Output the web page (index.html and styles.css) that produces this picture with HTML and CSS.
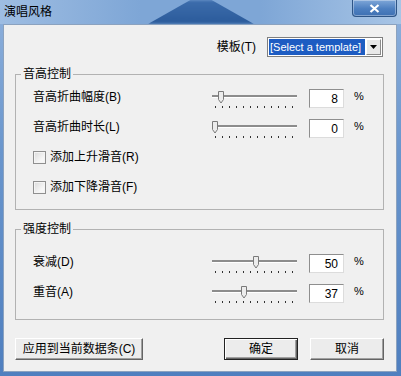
FILE: index.html
```html
<!DOCTYPE html>
<html lang="zh-CN">
<head>
    <meta charset="UTF-8">
    <title>演唱风格</title>
    <link rel="stylesheet" href="styles.css">
</head>
<body>
    <div class="window">
        <div class="titlebar">
            <span class="title">演唱风格</span>
            <span class="close">
                <svg width="11" height="9" viewBox="0 0 11 9"><path d="M1.5 1 L9.5 8 M9.5 1 L1.5 8" stroke="#fff" stroke-width="2.2"/></svg>
            </span>
        </div>

        <div class="panel">
            <div class="template-row">
                <label>模板(T)</label>
                <div class="combo">
                    <span class="combo-text">[Select a template]</span>
                    <span class="combo-btn">
                        <svg width="7" height="4" viewBox="0 0 7 4"><path d="M0 0 H7 L3.5 4 Z" fill="#000"/></svg>
                    </span>
                </div>
            </div>

            <fieldset class="group group-pitch">
                <legend>音高控制</legend>
                <div class="row">
                    <span class="label">音高折曲幅度(B)</span>
                    <svg class="slider" width="85" height="30" viewBox="0 0 85 30">
                        <rect x="0" y="13" width="85" height="2" fill="#8c8c8c"/>
                        <rect x="0" y="15" width="85" height="1" fill="#fff"/>
                        <path d="M6.5 9.5 h5 v8 l-2.5 3.5 l-2.5 -3.5 z" fill="#ececec" stroke="#7a7a7a"/>
                        <line x1="3" y1="25" x2="84" y2="25" stroke="#333" stroke-width="2" stroke-dasharray="1 6"/>
                    </svg>
                    <input class="num" type="text" value="8">
                    <span class="pct">%</span>
                </div>
                <div class="row">
                    <span class="label">音高折曲时长(L)</span>
                    <svg class="slider" width="85" height="30" viewBox="0 0 85 30">
                        <rect x="0" y="13" width="85" height="2" fill="#8c8c8c"/>
                        <rect x="0" y="15" width="85" height="1" fill="#fff"/>
                        <path d="M0.5 9.5 h5 v8 l-2.5 3.5 l-2.5 -3.5 z" fill="#ececec" stroke="#7a7a7a"/>
                        <line x1="3" y1="25" x2="84" y2="25" stroke="#333" stroke-width="2" stroke-dasharray="1 6"/>
                    </svg>
                    <input class="num" type="text" value="0">
                    <span class="pct">%</span>
                </div>
                <div class="row">
                    <label class="check"><span class="box"></span>添加上升滑音(R)</label>
                </div>
                <div class="row">
                    <label class="check"><span class="box"></span>添加下降滑音(F)</label>
                </div>
            </fieldset>

            <fieldset class="group group-strength">
                <legend>强度控制</legend>
                <div class="row">
                    <span class="label">衰减(D)</span>
                    <svg class="slider" width="85" height="30" viewBox="0 0 85 30">
                        <rect x="0" y="13" width="85" height="2" fill="#8c8c8c"/>
                        <rect x="0" y="15" width="85" height="1" fill="#fff"/>
                        <path d="M41.5 9.5 h5 v8 l-2.5 3.5 l-2.5 -3.5 z" fill="#ececec" stroke="#7a7a7a"/>
                        <line x1="3" y1="25" x2="84" y2="25" stroke="#333" stroke-width="2" stroke-dasharray="1 6"/>
                    </svg>
                    <input class="num" type="text" value="50">
                    <span class="pct">%</span>
                </div>
                <div class="row">
                    <span class="label">重音(A)</span>
                    <svg class="slider" width="85" height="30" viewBox="0 0 85 30">
                        <rect x="0" y="13" width="85" height="2" fill="#8c8c8c"/>
                        <rect x="0" y="15" width="85" height="1" fill="#fff"/>
                        <path d="M29.5 9.5 h5 v8 l-2.5 3.5 l-2.5 -3.5 z" fill="#ececec" stroke="#7a7a7a"/>
                        <line x1="3" y1="25" x2="84" y2="25" stroke="#333" stroke-width="2" stroke-dasharray="1 6"/>
                    </svg>
                    <input class="num" type="text" value="37">
                    <span class="pct">%</span>
                </div>
            </fieldset>

            <div class="buttons">
                <button type="button" class="btn btn-apply">应用到当前数据条(C)</button>
                <button type="button" class="btn btn-ok">确定</button>
                <button type="button" class="btn">取消</button>
            </div>
        </div>
    </div>
</body>
</html>
```

FILE: styles.css
```css
html,body{
    margin: 0;
    padding: 0;
}
body{
    font: 12px/14px "Liberation Sans", "Noto Sans CJK SC", sans-serif;
    color: #000;
}
.window{
    width: 401px;
    height: 376px;
    display: flex;
    flex-direction: column;
    background: linear-gradient(#8fb1dc, #6a96cd 40%, #4f7fbf);
    overflow: hidden;
}
.titlebar{
    height: 24px;
    flex: none;
    display: flex;
    align-items: flex-start;
    position: relative;
    background: linear-gradient(90deg, #9ebde2, #7ea6d6 35%, #7ea6d6 65%, #a8c5e6);
}
.titlebar::before{
    content: "";
    position: absolute;
    left: 148px;
    top: 0;
    width: 106px;
    height: 24px;
    background: linear-gradient(#3d6dac, #2a5a9a);
    clip-path: polygon(40% 0, 60% 0, 100% 100%, 0 100%);
    filter: blur(1.5px);
}
.title{
    position: relative;
    margin: 5px 0 0 4px;
    line-height: 14px;
}
.close{
    position: relative;
    margin: 0 4px 0 auto;
    width: 45px;
    height: 17px;
    box-sizing: border-box;
    border: 1px solid #2e5587;
    border-top: none;
    border-radius: 0 0 4px 4px;
    background: linear-gradient(#7fa7d8, #4d7fc0 55%, #3e70b2);
    box-shadow: inset 0 0 0 1px rgba(255,255,255,0.35);
    display: flex;
    align-items: center;
    justify-content: center;
}
.close svg{
    display: block;
}
.panel{
    flex: 1;
    margin: 0 4px 4px 3px;
    box-sizing: border-box;
    background-color: #f0f0f0;
    border: 1px solid #8ba2bf;
    display: flex;
    flex-direction: column;
}
.template-row{
    margin-top: 12px;
    height: 20px;
    padding-right: 13px;
    display: flex;
    align-items: center;
    justify-content: flex-end;
}
.template-row label{
    margin-right: 11px;
}
.combo{
    width: 116px;
    height: 20px;
    box-sizing: border-box;
    border: 1px solid #7f7f7f;
    background-color: #fff;
    display: flex;
    align-items: center;
    padding: 0 1px;
}
.combo-text{
    width: 96px;
    height: 16px;
    box-sizing: border-box;
    padding-left: 1px;
    background-color: #1d5cc2;
    color: #fff;
    font-size: 11px;
    line-height: 16px;
    white-space: nowrap;
    overflow: hidden;
}
.combo-btn{
    margin-left: auto;
    width: 15px;
    height: 16px;
    box-sizing: border-box;
    background-color: #e8e8e8;
    border: 1px solid;
    border-color: #fff #8a8a8a #8a8a8a #fff;
    display: flex;
    align-items: center;
    justify-content: center;
}
.combo-btn svg{
    display: block;
}
.group{
    margin: 10px 12px 0 11px;
    padding: 0 0 0 5px;
    min-width: 0;
    border: 1px solid #b2b2b2;
}
.group legend{
    padding: 0 2px;
    line-height: 14px;
}
.group-pitch{
    padding-top: 1px;
    padding-bottom: 7px;
}
.group-strength{
    margin-top: 12px;
    padding-top: 11px;
    padding-bottom: 12px;
}
.row{
    height: 30px;
    padding-left: 12px;
    display: flex;
    align-items: center;
}
.row .label{
    width: 179px;
    flex: none;
}
.slider{
    display: block;
    flex: none;
}
.num{
    width: 35px;
    height: 19px;
    margin: 3px 0 0 12px;
    box-sizing: border-box;
    padding: 0 5px 0 0;
    border: 1px solid;
    border-color: #8e8e8e #dcdcdc #dcdcdc #8e8e8e;
    background-color: #fff;
    font: 12px "Liberation Sans", sans-serif;
    text-align: right;
    outline: 0;
}
.pct{
    margin: 0 0 3px 10px;
    font-size: 11px;
}
.check{
    display: flex;
    align-items: center;
}
.check .box{
    width: 13px;
    height: 13px;
    box-sizing: border-box;
    margin-right: 4px;
    border: 1px solid #8f8f8f;
    background: linear-gradient(135deg, #dadada, #f7f7f7 70%);
    box-shadow: inset 0 0 0 1px #f4f4f4;
}
.buttons{
    margin-top: 18px;
    padding: 0 12px 0 11px;
    display: flex;
}
.btn{
    height: 22px;
    width: 74px;
    box-sizing: border-box;
    padding: 0;
    border: 1px solid;
    border-color: #fff #646464 #646464 #fff;
    box-shadow: inset -1px -1px 0 #a0a0a0;
    background-color: #ececec;
    font: 12px/14px "Liberation Sans", "Noto Sans CJK SC", sans-serif;
    color: #000;
    cursor: pointer;
    outline: 0;
}
.btn-apply{
    width: 128px;
    margin-right: auto;
}
.btn-ok{
    margin-right: 12px;
    border-color: #222;
    box-shadow: inset 1px 1px 0 #fff, inset -1px -1px 0 #646464, inset -2px -2px 0 #a0a0a0;
}
```
